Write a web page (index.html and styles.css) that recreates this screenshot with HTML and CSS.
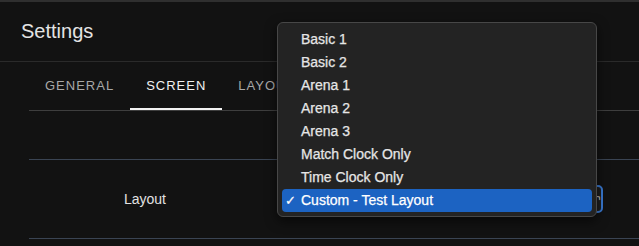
FILE: index.html
```html
<!DOCTYPE html>
<html lang="en">
<head>
    <meta charset="UTF-8">
    <title>Settings</title>
    <link rel="stylesheet" href="styles.css">
</head>
<body>
    <header class="top-bar">
        <h1>Settings</h1>
    </header>
    <div class="content">
        <nav class="tabs">
            <span class="tab">GENERAL</span>
            <span class="tab active">SCREEN</span>
            <span class="tab">LAYOUT</span>
            <span class="tab">ADVANCED</span>
        </nav>
        <div class="row empty"></div>
        <div class="row field">
            <label class="field-label">Layout</label>
            <div class="field-control">
                <div class="select">
                    <span class="select-arrow">&#8250;</span>
                </div>
            </div>
        </div>
    </div>
    <ul class="menu">
        <li>Basic 1</li>
        <li>Basic 2</li>
        <li>Arena 1</li>
        <li>Arena 2</li>
        <li>Arena 3</li>
        <li>Match Clock Only</li>
        <li>Time Clock Only</li>
        <li class="selected"><span class="check">&#10003;</span>Custom - Test Layout</li>
    </ul>
</body>
</html>
```

FILE: styles.css
```css
body {
    margin: 0;
    padding: 0;
    background: #121212;
    color: #e6e6e6;
    font-family: 'Liberation Sans', Arial, sans-serif;
    border-top: 2px solid #2f2f2f;
    overflow: hidden;
}
.top-bar {
    height: 59px;
    display: flex;
    align-items: center;
    padding-left: 21px;
    border-bottom: 1px solid #2a2a2a;
}
.top-bar h1 {
    margin: 0;
    font-size: 20px;
    font-weight: normal;
    color: #e4e4e4;
}
.content {
    padding-left: 29px;
}
.tabs {
    display: flex;
    height: 48px;
    border-bottom: 1px solid #3e3e3e;
    white-space: nowrap;
}
.tab {
    padding: 0 16px;
    display: flex;
    align-items: center;
    font-size: 13px;
    letter-spacing: 1px;
    color: #a8a8a8;
    box-sizing: border-box;
    border-bottom: 2px solid transparent;
    padding-top: 1px;
}
.tab.active {
    color: #f2f2f2;
    border-bottom-color: #f2f2f2;
}
.row {
    border-bottom: 1px solid #3a4453;
}
.row.empty {
    height: 48px;
}
.row.field {
    height: 78px;
    display: flex;
    align-items: center;
}
.field-label {
    width: 232px;
    text-align: center;
    font-size: 14px;
    color: #e2e2e2;
}
.field-control {
    flex: 1;
}
.select {
    width: 322px;
    height: 24px;
    margin-left: 16px;
    border: 2px solid #3a7bd5;
    border-radius: 5px;
    background: #1e1e1e;
    position: relative;
}
.select-arrow {
    position: absolute;
    right: 1px;
    top: 3px;
    font-size: 12px;
    color: #ddd;
    transform: rotate(-45deg);
}
.menu {
    position: absolute;
    left: 277px;
    top: 22px;
    width: 320px;
    margin: 0;
    padding: 5px 4px 4px;
    list-style: none;
    background: #232323;
    border: 1px solid #474747;
    border-radius: 6px;
    box-shadow: 0 4px 12px rgba(0, 0, 0, 0.6);
    box-sizing: border-box;
    font-family: 'Liberation Sans', Arial, sans-serif;
    font-size: 14px;
    -webkit-text-stroke: 0.25px currentColor;
}
.menu li {
    height: 23px;
    line-height: 23px;
    padding-left: 19px;
    color: #e6e6e6;
    border-radius: 4px;
    position: relative;
}
.menu li.selected {
    background: #1c63c2;
    color: #fff;
}
.check {
    position: absolute;
    left: 3px;
    font-size: 13px;
}
```
